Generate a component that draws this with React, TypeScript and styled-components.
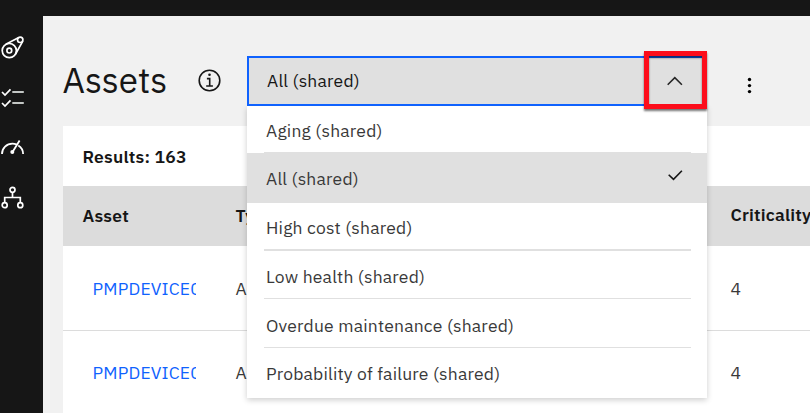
import React from "react";
import styled, { createGlobalStyle } from "styled-components";

const Global = createGlobalStyle`
  * { box-sizing: border-box; }
  body { margin: 0; overflow: hidden; font-family: "IBM Plex Sans", Roboto, "Liberation Sans", sans-serif; color: #161616; }
`;
const Page = styled.div`
  width: 810px; height: 413px; overflow: hidden; display: flex; flex-direction: column; background: #161616;
`;
const TopBar = styled.header`height: 16px; flex: none; background: #161616;`;
const Body = styled.div`flex: 1; display: flex; min-height: 0;`;
const SideNav = styled.nav`
  width: 43px; flex: none; background: #161616; padding-top: 19px; display: flex; flex-direction: column;
`;
const NavItem = styled.a`height: 50px; display: block; svg { display: block; }`;
const Content = styled.main`flex: 1; min-width: 0; background: #f1f1f1; padding-left: 20px;`;
const Toolbar = styled.div`height: 110px; display: flex; align-items: flex-start;`;
const Title = styled.h1`
  width: 134.5px; margin: 43px 0 0 -0.5px; font-size: 35px; line-height: 42px; font-weight: 400;
`;
const InfoButton = styled.span`width: 50px; margin-top: 52px; svg { display: block; }`;
const Combo = styled.div`position: relative; width: 460px; height: 50px; margin-top: 40px;`;
const Field = styled.div`
  height: 50px; display: flex; justify-content: space-between; background: #e0e0e0; border: 2px solid #0f62fe; padding: 13px 0 0 18px;
`;
const Label = styled.span`
  font-size: 17.5px; line-height: 20px; white-space: nowrap; letter-spacing: 0.2px;
`;
const Highlight = styled.div`
  position: absolute; right: 0; top: -5px; width: 63px; height: 58px; border: 5px solid #fc0d1b;
  box-shadow: 0 2px 2px rgba(0, 0, 0, 0.55), inset 0 2px 2px rgba(0, 0, 0, 0.55);
  display: flex; align-items: center; justify-content: center; padding: 1px 2px 0 0;
`;
const Menu = styled.ul`
  position: absolute; top: 50px; left: 0; width: 460px; margin: 0; padding: 0; list-style: none;
  background: #fff; box-shadow: 0 2px 6px rgba(0, 0, 0, 0.2); color: #393939; z-index: -1;
`;
const Layer = styled.div`position: relative; z-index: 1;`;
const Option = styled.li<{ $h: number; $selected?: boolean }>`
  height: ${(p) => p.$h}px; padding: 0 16px 0 17px; background: ${(p) => (p.$selected ? "#e0e0e0" : "#fff")};
`;
const OptionInner = styled.div<{ $line: number; $top: number }>`
  height: 100%; padding: ${(p) => p.$top}px 8px 0 2px; display: flex; justify-content: space-between;
  border-bottom: ${(p) => p.$line}px solid #e0e0e0;
`;
const Overflow = styled.span`margin: 60px 0 0 40px; svg { display: block; }`;
const Table = styled.section`width: 747px; background: #fff;`;
const Results = styled.div`height: 60px; padding: 21px 0 0 19.5px; font-weight: 600;`;
const HeadRow = styled.div`
  display: grid; grid-template-columns: 153px 495px 1fr; height: 60px; padding: 20px 0 0 19.5px;
  background: #dcdcdc; font-weight: 600;
`;
const Row = styled.div`
  display: grid; grid-template-columns: 153px 495px 1fr; height: 85px; padding: 33px 0 0 19.5px;
  border-bottom: 1px solid #dcdcdc; color: #393939;
  & + & { padding-top: 32px; }
`;
const Cell = styled.div`white-space: nowrap;`;
const LastHeadCell = styled(Cell)`margin-top: -1px;`;
const AssetLink = styled.a`
  display: block; margin-left: 10px; width: 103.5px; overflow: hidden; white-space: nowrap; color: #0f62fe;
`;

const options = [
  { text: "Aging (shared)", h: 47, top: 15, line: 1 },
  { text: "All (shared)", h: 50, top: 16, line: 0, selected: true },
  { text: "High cost (shared)", h: 48, top: 15, line: 2 },
  { text: "Low health (shared)", h: 48, top: 16, line: 1 },
  { text: "Overdue maintenance (shared)", h: 49, top: 17, line: 1 },
  { text: "Probability of failure (shared)", h: 50, top: 16, line: 0 },
];

const navIcons = [
  <svg width="26" height="26" viewBox="0 0 26 26" fill="none" stroke="#fff" strokeWidth="1.7">
    <circle cx="9.3" cy="15.6" r="7.1" /><circle cx="9.3" cy="15.6" r="2.4" />
    <circle cx="20.2" cy="4.8" r="2.7" /><path d="M5.8 9.3 18.8 2.4M22.8 6.1 15.6 19" />
  </svg>,
  <svg width="26" height="26" viewBox="0 0 26 26" fill="none" stroke="#fff" strokeWidth="1.7">
    <path d="m2 7 3 3 5.5-5.6M2 18l3 3 5.5-5.6" /><path d="M12.3 7h11.5M12.3 18h11.5" stroke="#c2c6c4" strokeWidth="1.9" />
  </svg>,
  <svg width="26" height="26" viewBox="0 0 26 26" fill="none" stroke="#fff" strokeWidth="1.8">
    <path d="M2 19C2 13 6.6 8.7 12.5 8.7c1.4 0 2.7.3 3.9.7M18.3 10.4c3 1.8 4.8 4.9 4.8 8.6M13 16.2 19.6 5.6" />
    <circle cx="12.3" cy="17" r="2" fill="#fff" stroke="none" />
  </svg>,
  <svg width="26" height="26" viewBox="0 0 26 26" fill="none" stroke="#fff" strokeWidth="1.7">
    <circle cx="12.5" cy="4.8" r="2.5" /><circle cx="4.7" cy="20.2" r="2.5" /><circle cx="20.3" cy="20.2" r="2.5" />
    <path d="M12.5 7.3v5.2M4.7 17.7v-5.2h15.6v5.2" />
  </svg>,
];

export default function App() {
  return (
    <>
      <Global />
      <Page>
        <TopBar />
        <Body>
          <SideNav>{navIcons.map((icon, i) => <NavItem key={i}>{icon}</NavItem>)}</SideNav>
          <Content>
            <Layer>
              <Toolbar>
                <Title>Assets</Title>
                <InfoButton>
                  <svg width="25" height="25" viewBox="0 0 25 25" fill="none" stroke="#161616" strokeWidth="1.6">
                    <circle cx="12.5" cy="12.5" r="10.3" />
                    <path d="M9.9 10.6h2.8v7.3M9.2 18h6.7" /><circle cx="12.5" cy="6.8" r="1.3" fill="#161616" stroke="none" />
                  </svg>
                </InfoButton>
                <Combo>
                  <Menu>
                    {options.map((o) => (
                      <Option key={o.text} $h={o.h} $selected={o.selected}>
                        <OptionInner $line={o.line} $top={o.top}>
                          <Label>{o.text}</Label>
                          {o.selected && (
                            <svg width="16" height="14" viewBox="0 0 16 14" fill="none" stroke="#161616" strokeWidth="1.6">
                              <path d="m1.7 5.7 4.8 4.7 8.4-8.7" />
                            </svg>
                          )}
                        </OptionInner>
                      </Option>
                    ))}
                  </Menu>
                  <Field><Label>All (shared)</Label></Field>
                  <Highlight>
                    <svg width="18" height="12" viewBox="0 0 18 12" fill="none" stroke="#262626" strokeWidth="1.6">
                      <path d="m1.7 9.7 7.1-7 7.1 7" />
                    </svg>
                  </Highlight>
                </Combo>
                <Overflow>
                  <svg width="5" height="20" viewBox="0 0 5 20" fill="#000">
                    <circle cx="2.5" cy="3.5" r="1.7" /><circle cx="2.5" cy="9.6" r="1.7" /><circle cx="2.5" cy="15.6" r="1.7" />
                  </svg>
                </Overflow>
              </Toolbar>
            </Layer>
            <Table>
              <Results><Label>Results: 163</Label></Results>
              <HeadRow>
                <Cell><Label>Asset</Label></Cell><Cell><Label>Type</Label></Cell><LastHeadCell><Label>Criticality</Label></LastHeadCell>
              </HeadRow>
              {["PMPDEVICE001", "PMPDEVICE002"].map((name) => (
                <Row key={name}>
                  <Cell><AssetLink><Label>{name}</Label></AssetLink></Cell>
                  <Cell><Label>Asset</Label></Cell><Cell><Label>4</Label></Cell>
                </Row>
              ))}
            </Table>
          </Content>
        </Body>
      </Page>
    </>
  );
}
